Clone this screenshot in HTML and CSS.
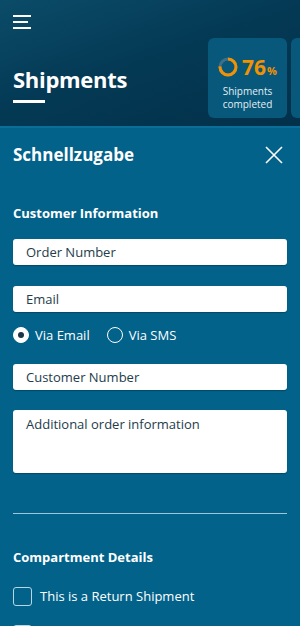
FILE: index.html
```html
<!DOCTYPE html>
<html>
<head>
<meta charset="utf-8">
<link rel="stylesheet" href="styles.css">
</head>
<body>
<header class="header">
  <div class="menu">
    <span class="bar"></span>
    <span class="bar short"></span>
    <span class="bar"></span>
  </div>
  <div class="header-row">
    <div class="title-wrap">
      <h1 class="title">Shipments</h1>
      <div class="title-line"></div>
    </div>
    <div class="cards">
      <div class="card">
        <div class="stat">
          <svg class="ring" width="20" height="20" viewBox="0 0 20 20">
            <circle cx="10" cy="10" r="8" fill="none" stroke="#3f6f86" stroke-width="3"/>
            <circle cx="10" cy="10" r="8" fill="none" stroke="#f39200" stroke-width="3" stroke-dasharray="38.2 50.3" transform="rotate(-90 10 10)"/>
          </svg>
          <span class="num">76</span><span class="pct">%</span>
        </div>
        <div class="card-label">Shipments<br>completed</div>
      </div>
      <div class="card"></div>
    </div>
  </div>
</header>
<main class="panel">
  <div class="panel-head">
    <h2 class="panel-title">Schnellzugabe</h2>
    <svg class="close" width="18" height="18" viewBox="0 0 18 18">
      <path d="M1 1L17 17M17 1L1 17" stroke="#fff" stroke-width="1.6" fill="none"/>
    </svg>
  </div>
  <h3 class="section">Customer Information</h3>
  <div class="field">Order Number</div>
  <div class="field">Email</div>
  <div class="radios">
    <label class="radio"><span class="dot on"></span>Via Email</label>
    <label class="radio"><span class="dot"></span>Via SMS</label>
  </div>
  <div class="field">Customer Number</div>
  <div class="field area">Additional order information</div>
  <hr class="divider">
  <h3 class="section">Compartment Details</h3>
  <label class="check"><span class="box"></span>This is a Return Shipment</label>
  <label class="check"><span class="box"></span>&nbsp;</label>
</main>
</body>
</html>
```
FILE: styles.css
```css
* { box-sizing: border-box; }
html, body { margin: 0; padding: 0; }
body {
  width: 300px;
  height: 626px;
  overflow: hidden;
  font-family: "Open Sans", "Noto Sans", sans-serif;
  background: #02628a;
  color: #fff;
}
.header {
  height: 128px;
  background: linear-gradient(160deg, #0b4c69 0%, #043a55 45%, #03304a 100%);
  border-bottom: 2px solid #0a6f98;
  padding: 15px 0 0 13px;
  overflow: hidden;
}
.menu {
  display: flex;
  flex-direction: column;
  gap: 4px;
  width: 18px;
}
.bar { display: block; height: 2px; width: 18px; background: #fff; }
.bar.short { width: 15px; }
.header-row {
  display: flex;
  margin-top: 9px;
}
.title-wrap { padding-top: 26px; width: 195px; flex: none; }
.title {
  margin: 0;
  font-size: 22px;
  font-weight: 700;
  line-height: 30px;
  letter-spacing: -0.3px;
}
.title-line {
  margin-top: 6px;
  width: 32px;
  height: 3px;
  background: #fff;
}
.cards { display: flex; gap: 4px; flex: none; }
.card {
  flex: none;
  width: 79px;
  height: 80px;
  border-radius: 6px;
  background: #07587b;
  display: flex;
  flex-direction: column;
  align-items: center;
  padding-top: 17px;
}
.stat { display: flex; align-items: baseline; }
.ring { align-self: center; margin-right: 4px; }
.num { font-size: 21px; font-weight: 700; color: #f39200; line-height: 24px; }
.pct { font-size: 11px; font-weight: 700; color: #f39200; margin-left: 1px; }
.card-label {
  margin-top: 6px;
  font-size: 10px;
  line-height: 13px;
  text-align: center;
  color: #e3eef3;
}
.panel { padding: 14px 13px 0; }
.panel-head {
  display: flex;
  justify-content: space-between;
  align-items: center;
  padding-right: 4px;
}
.panel-title { margin: 0; font-size: 17px; font-weight: 700; line-height: 26px; }
.section {
  margin: 0;
  font-size: 13px;
  font-weight: 700;
  line-height: 18px;
}
.panel-head + .section { margin-top: 36px; }
.field {
  margin-top: 13px;
  height: 26px;
  border-radius: 3px;
  background: #fff;
  color: #233c4b;
  font-size: 13px;
  line-height: 26px;
  padding-left: 13px;
  box-shadow: 0 1px 1px rgba(0,0,0,0.25);
}
.section + .field { margin-top: 17px; }
.field + .field { margin-top: 21px; }
.field + .field.area { margin-top: 20px; }
.radios + .field { margin-top: 21px; }
.field.area { height: 63px; line-height: 18px; padding-top: 5px; }
.radios { display: flex; gap: 17px; margin-top: 15px; height: 16px; align-items: center; }
.radio { display: flex; align-items: center; font-size: 13px; gap: 6px; }
.dot {
  width: 16px; height: 16px; border-radius: 50%;
  border: 1.5px solid #fff;
  display: inline-flex; align-items: center; justify-content: center;
}
.dot.on { background: #fff; }
.dot.on::after {
  content: ""; width: 6px; height: 6px; border-radius: 50%; background: #1e3545;
}
.divider {
  margin: 40px 0 0;
  border: 0;
  height: 1px;
  background: #9ec6d8;
}
.divider + .section { margin-top: 34px; }
.check { display: flex; align-items: center; gap: 8px; font-size: 13px; margin-top: 20px; height: 20px; }
.check + .check { margin-top: 18px; }
.box {
  width: 19px; height: 19px;
  border: 1.5px solid #b9d6e3;
  border-radius: 3px;
  flex: none;
}
```
